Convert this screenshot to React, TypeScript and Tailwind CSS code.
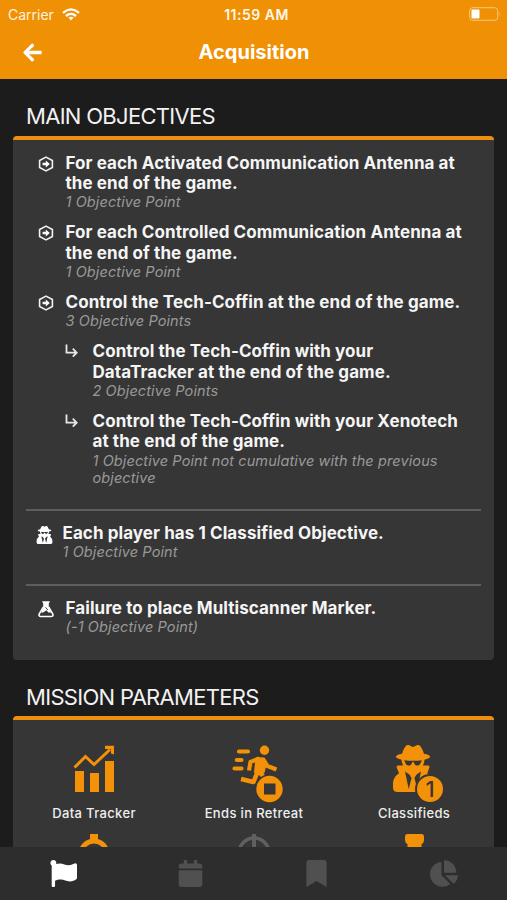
import type { ReactNode } from "react";
import {
  FaArrowLeft,
  FaBookmark,
  FaCalendar,
  FaChartPie,
  FaFlag,
  FaUserSecret,
} from "react-icons/fa";

function HexIcon() {
  return (
    <svg viewBox="0 0 16 16" className="w-4 h-4" fill="none" stroke="#f2f2f2">
      <path d="M8 1.1 14.4 4.5V11.5L8 14.9 1.6 11.5V4.5Z" strokeWidth="1.6" strokeLinejoin="round" />
      <path d="M4.6 6.7H7.8V4.5L11.8 8 7.8 11.5V9.3H4.6Z" fill="#fff" stroke="none" />
    </svg>
  );
}

function SubIcon() {
  return (
    <svg viewBox="0 0 13 14" className="w-[13px] h-3.5" fill="none" stroke="#e8e8e8" strokeWidth="1.8">
      <path d="M1.5 0.5V8.7H11.3M7.8 4.7 11.7 8.7 7.8 12.7" />
    </svg>
  );
}

function MarkerIcon() {
  return (
    <svg viewBox="0 0 16 17" className="w-4 h-[17px]" fill="none" stroke="#fff">
      <path d="M5.4 5.8 1.3 12.8Q0.3 15.5 3 15.5H13Q15.7 15.5 14.7 12.8L10.6 5.8" strokeWidth="1.6" />
      <path d="M4 0.3H12L10.8 2.5V6L13.5 11.5H10.3L8.5 9.2 6.3 10.8 4.5 11.8H3.4L5.2 6V2.5Z" fill="#fff" stroke="none" />
      <path d="M7.6 6.3 9.8 9" stroke="#363636" strokeWidth="0.9" />
    </svg>
  );
}

function DataTrackerIcon() {
  return (
    <svg viewBox="0 0 42 48" className="w-[42px] h-12" fill="#f39108">
      <path d="M2 26h9v21H2zM17 28h9v19h-9zM32 16h9v31h-9z" />
      <path d="M1.5 22.5 12.5 11.5 21 19.5 37 4.5" fill="none" stroke="#f39108" strokeWidth="3" />
      <path d="M32 0.8H41V9.5L38 8.5V4H32Z" />
    </svg>
  );
}

function RetreatIcon() {
  return (
    <svg viewBox="0 0 52 58" className="w-[52px] h-[58px]" fill="none" stroke="#f39108" strokeLinecap="round" strokeLinejoin="round">
      <path d="M7 6.5H16M4.8 15H9.5M2.5 23.5H9.5" strokeWidth="4.2" />
      <circle cx="32.5" cy="5.3" r="4.7" fill="#f39108" stroke="none" />
      <path d="M27.5 13.5 18.5 17 17 25.5M31.5 15 35.5 21 44.5 24.5" strokeWidth="4.2" strokeLinecap="butt" />
      <path d="M24.5 13 32 13.5 34 18 31.5 27.5 23 27Z" fill="#f39108" strokeWidth="2" />
      <path d="M25.5 27 21.5 37 9 34" strokeWidth="4.6" strokeLinecap="butt" />
      <path d="M27 27 31 31" strokeWidth="4.4" />
      <circle cx="37.5" cy="44" r="14.7" fill="#363636" stroke="none" />
      <circle cx="37.5" cy="44" r="13.2" fill="#f39108" stroke="none" />
      <path d="M32 38.5H43.5V49.5H32Z" fill="#363636" stroke="none" />
    </svg>
  );
}

function ClassifiedsIcon() {
  return (
    <div className="relative w-[50px] h-[57px]">
      <FaUserSecret className="w-10 h-[47px] text-[#f39108]" preserveAspectRatio="none" />
      <span className="absolute left-[24px] top-[31px] w-[26px] h-[26px] rounded-full bg-[#f39108] ring-2 ring-[#363636] text-[#363636] text-[22px] font-medium leading-[26px] text-center">
        1
      </span>
    </div>
  );
}

type ObjectiveProps = {
  icon: ReactNode;
  title: ReactNode;
  points: ReactNode;
  className?: string;
};

function Objective({ icon, title, points, className = "pl-[25px]" }: ObjectiveProps) {
  return (
    <div className={`flex items-start ${className}`}>
      <div className="w-[27.5px] shrink-0 pt-[3px]">{icon}</div>
      <div className="whitespace-nowrap">
        <h3 className="text-[17px] leading-[20.3px] font-bold tracking-[0.08px] text-[#f5f5f5]">{title}</h3>
        <p className="text-[14.5px] leading-[17.7px] italic tracking-[0.1px] text-[#999]">{points}</p>
      </div>
    </div>
  );
}

function SectionTitle({ children }: { children: ReactNode }) {
  return <h2 className="pl-[26px] text-[22px] leading-7 tracking-[-0.7px] text-[#f2f2f2]">{children}</h2>;
}

function Parameter({ icon, label }: { icon: ReactNode; label: string }) {
  return (
    <div className="flex flex-col items-center w-40">
      <div className="h-[60px]">{icon}</div>
      <span className="text-[13px] leading-4 font-medium tracking-[0.35px] text-[#eee] whitespace-nowrap">{label}</span>
    </div>
  );
}

export default function App() {
  return (
    <div className="flex flex-col h-[900px] w-[507px] overflow-hidden bg-[#1c1c1c] font-['Inter',sans-serif]">
      <header className="h-[79px] shrink-0 bg-[#f09005] text-white">
        <div className="grid grid-cols-3 items-center h-7 pl-2 pr-1.5">
          <div className="flex items-center gap-2 text-[14px] text-[#fff3df]">
            <span>Carrier</span>
            <svg viewBox="0 0 18 13" className="w-[18px] h-[13px]" fill="none" stroke="#fff" strokeWidth="2.3">
              <path d="M1 4.8Q9-2 17 4.8M4 8Q9 3.8 14 8" />
              <path d="M6.4 9.6Q9 7.7 11.6 9.6L9 12.5Z" fill="#fff" stroke="none" />
            </svg>
          </div>
          <span className="pl-1 text-center text-[14px] font-semibold tracking-[0.5px] whitespace-nowrap text-[#fff8ec]">11:59 AM</span>
          <svg viewBox="0 0 32 14" className="w-8 h-3.5 justify-self-end" fill="none">
            <rect x="0.7" y="0.7" width="28" height="12.6" rx="3" stroke="#f9c77f" />
            <rect x="2.5" y="2.5" width="8" height="9" rx="1" fill="#fff" />
            <path d="M30.5 5V9Q32 7 30.5 5" fill="#f9c77f" />
          </svg>
        </div>
        <div className="grid grid-cols-3 items-center h-12">
          <FaArrowLeft className="ml-[22px] w-[21px] h-[21px]" />
          <h1 className="pl-px text-center text-[20px] font-bold">Acquisition</h1>
        </div>
      </header>

      <main className="flex-1 min-h-0 overflow-hidden pt-[23px]">
        <SectionTitle>MAIN OBJECTIVES</SectionTitle>
        <section className="mt-[6px] mx-[13px] h-[524px] rounded bg-[#363636] border-t-4 border-[#ed9010] pt-[12.7px]">
          <div className="flex flex-col gap-[11.4px]">
            <Objective
              icon={<HexIcon />}
              title={<>For each Activated Communication Antenna at<br />the end of the game.</>}
              points="1 Objective Point"
            />
            <Objective
              icon={<HexIcon />}
              title={<>For each Controlled Communication Antenna at<br />the end of the game.</>}
              points="1 Objective Point"
            />
            <Objective
              icon={<HexIcon />}
              title="Control the Tech-Coffin at the end of the game."
              points="3 Objective Points"
            />
            <Objective
              className="pl-[52px]"
              icon={<SubIcon />}
              title={<>Control the Tech-Coffin with your<br />DataTracker at the end of the game.</>}
              points="2 Objective Points"
            />
            <Objective
              className="pl-[52px]"
              icon={<SubIcon />}
              title={<>Control the Tech-Coffin with your Xenotech<br />at the end of the game.</>}
              points={<>1 Objective Point not cumulative with the previous<br />objective</>}
            />
          </div>
          <hr className="mt-[22.2px] mx-[13px] border-t-2 border-[#5e5e5e]" />
          <Objective
            className="pl-[22px] pt-[11.6px]"
            icon={<FaUserSecret className="ml-px w-[17px] h-[18px] text-white" />}
            title="Each player has 1 Classified Objective."
            points="1 Objective Point"
          />
          <hr className="mt-[23.3px] mx-[13px] border-t-2 border-[#5e5e5e]" />
          <Objective
            className="pl-[25px] pt-[11.6px]"
            icon={<MarkerIcon />}
            title="Failure to place Multiscanner Marker."
            points="(-1 Objective Point)"
          />
        </section>

        <div className="mt-[23px]">
          <SectionTitle>MISSION PARAMETERS</SectionTitle>
        </div>
        <section className="mt-[5px] mx-[13px] h-[300px] rounded bg-[#363636] border-t-4 border-[#ed9010] pt-[25px]">
          <div className="flex pl-px">
            <Parameter icon={<DataTrackerIcon />} label="Data Tracker" />
            <Parameter icon={<div className="pl-2"><RetreatIcon /></div>} label="Ends in Retreat" />
            <Parameter icon={<div className="pl-2"><ClassifiedsIcon /></div>} label="Classifieds" />
          </div>
          <div className="flex pl-px mt-[13px]">
            <div className="w-40 flex justify-center">
              <svg viewBox="0 0 42 48" className="w-[42px] h-12" fill="none" stroke="#f39108">
                <path d="M17 0H25V7H17Z" fill="#f39108" stroke="none" />
                <circle cx="21" cy="20" r="13" strokeWidth="5" />
              </svg>
            </div>
            <div className="w-40 flex justify-center">
              <svg viewBox="0 0 42 48" className="w-[42px] h-12" fill="none" stroke="#606060">
                <path d="M21 0V14" strokeWidth="4" />
                <circle cx="21" cy="19" r="15" strokeWidth="3.5" />
              </svg>
            </div>
            <div className="w-40 flex justify-center">
              <svg viewBox="0 0 42 48" className="w-[42px] h-12" fill="#f39108">
                <path d="M14.5 0H28.5Q31 0 31 3V6Q31 9 28.5 10V26L40 46H2L14.5 26V10Q12 9 12 6V3Q12 0 14.5 0Z" />
              </svg>
            </div>
          </div>
        </section>
      </main>

      <nav className="flex items-start h-[53px] shrink-0 bg-[#2d2d2d] pt-[13px] text-[#505050]">
        <div className="flex-1 flex justify-center"><FaFlag className="w-[27px] h-[27px] text-white" /></div>
        <div className="flex-1 flex justify-center"><FaCalendar className="w-[27px] h-[27px]" /></div>
        <div className="flex-1 flex justify-center"><FaBookmark className="w-[27px] h-[27px]" /></div>
        <div className="flex-1 flex justify-center"><FaChartPie className="w-7 h-[27px]" /></div>
      </nav>
    </div>
  );
}
